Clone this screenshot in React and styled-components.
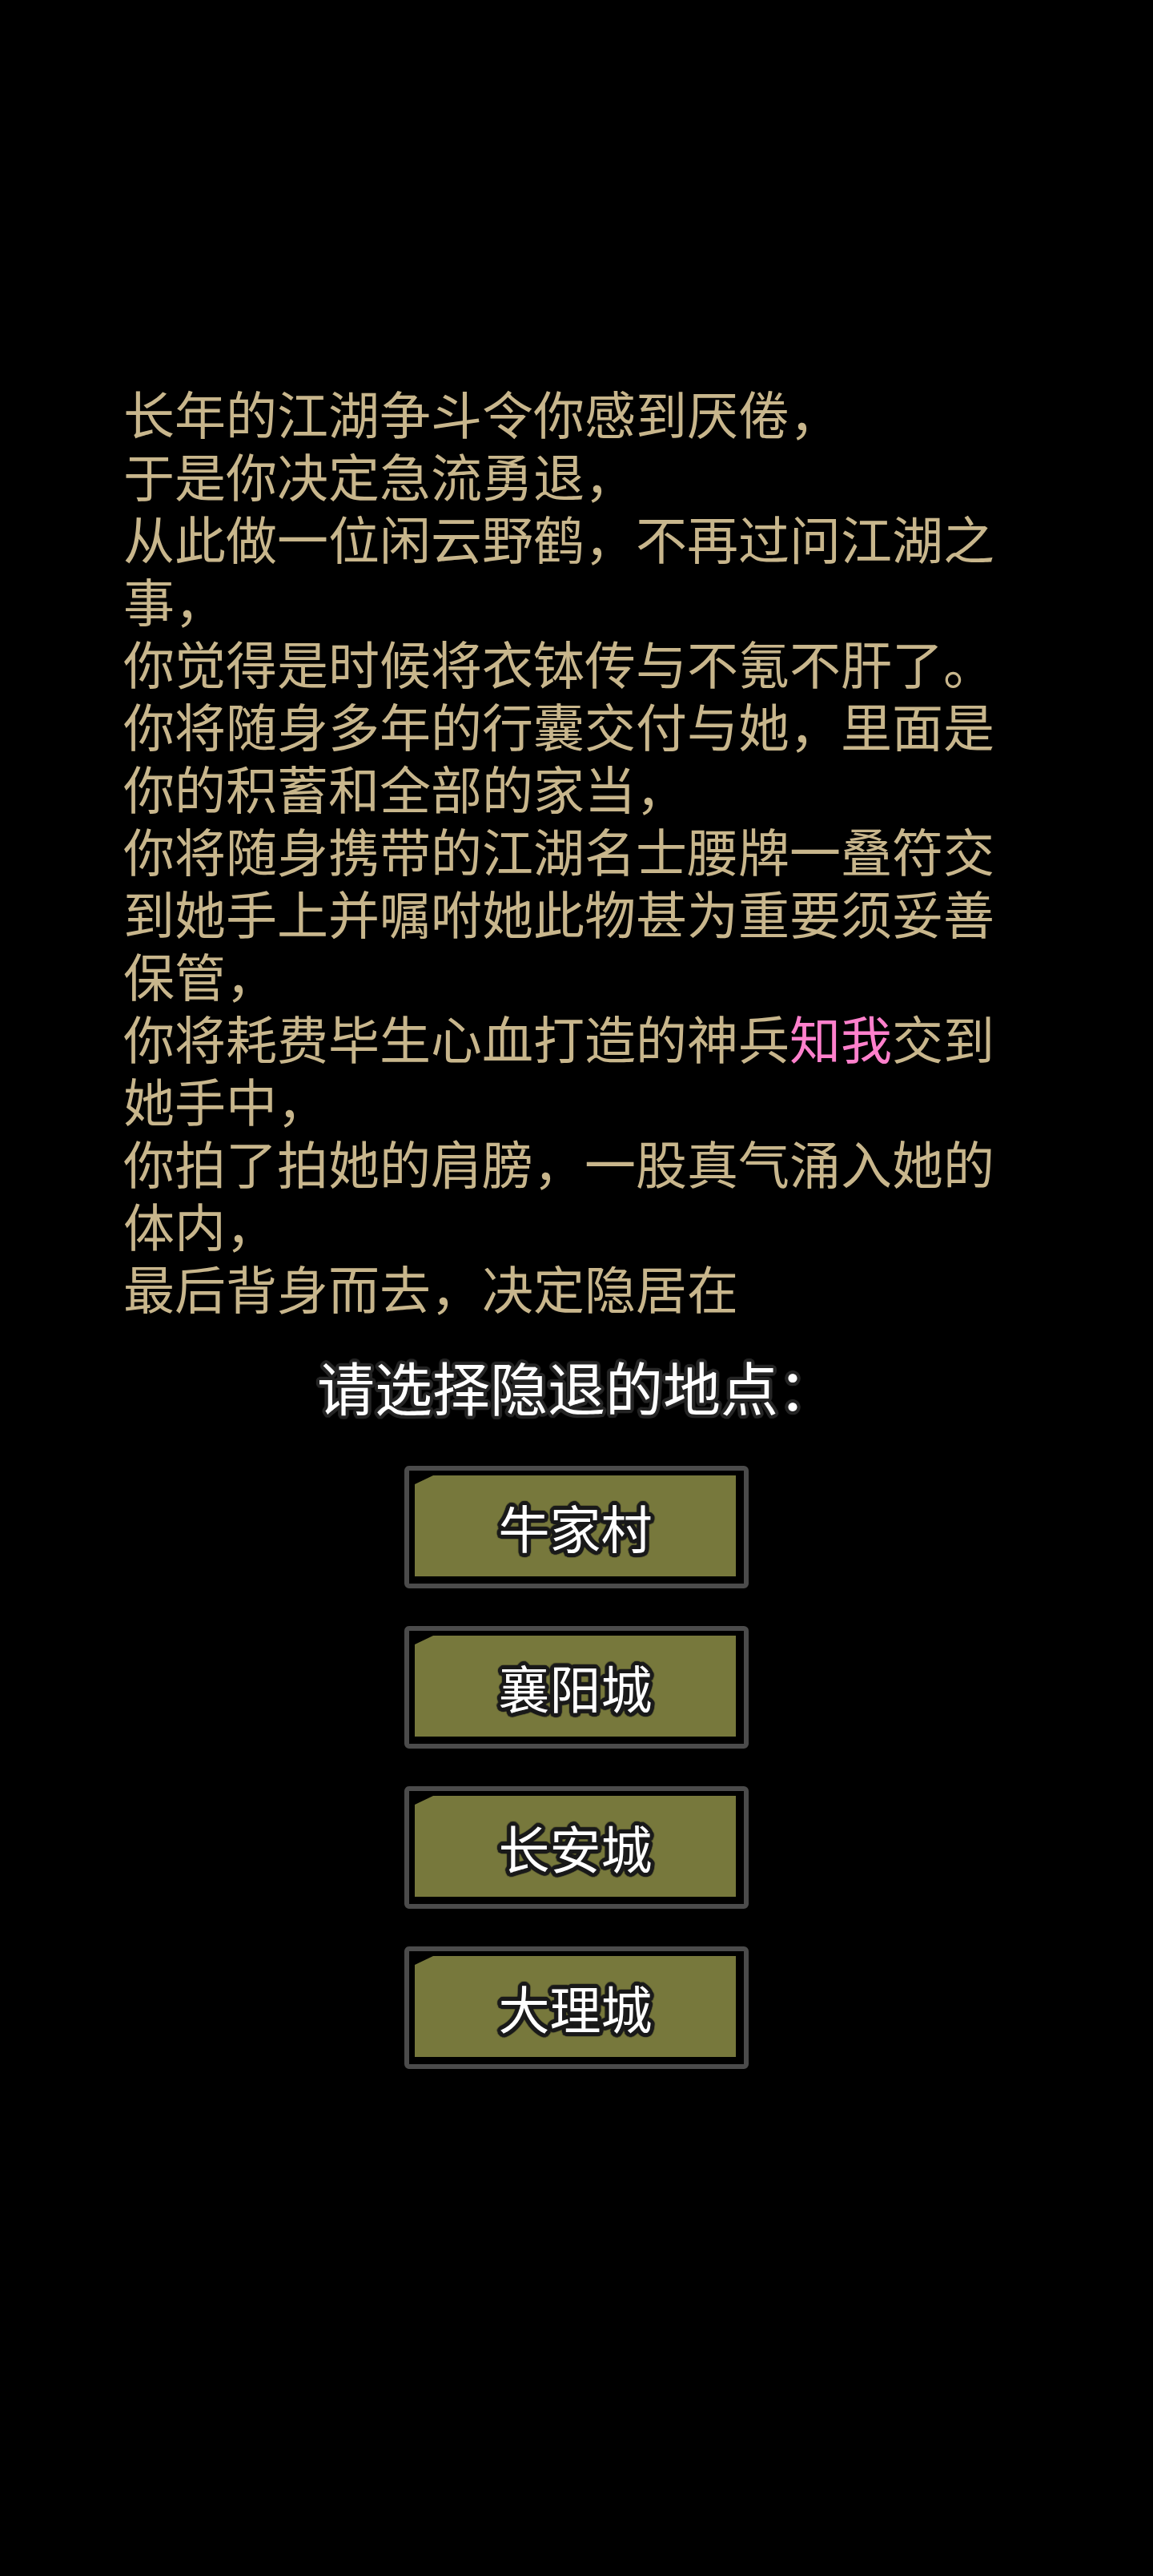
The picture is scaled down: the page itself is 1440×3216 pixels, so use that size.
import React from "react";
import styled, { createGlobalStyle } from "styled-components";

const GlobalStyle = createGlobalStyle`
  html, body {
    margin: 0;
    padding: 0;
    background: #000;
  }
  body {
    font-family: "Noto Sans CJK SC", "Noto Sans", sans-serif;
  }
`;

// builds a ring of shadows so the text gets a solid outline
const outline = (size, color) => {
  const parts = [];
  for (let i = 0; i < 24; i++) {
    const a = (i / 24) * Math.PI * 2;
    const x = (Math.cos(a) * size).toFixed(1);
    const y = (Math.sin(a) * size).toFixed(1);
    parts.push(`${x}px ${y}px 1px ${color}`);
  }
  return parts.join(", ");
};

const places = ["牛家村", "襄阳城", "长安城", "大理城"];

export default function App() {
  return (
    <>
      <GlobalStyle />
      <Page>
        <Story>
          <Line>长年的江湖争斗令你感到厌倦，</Line>
          <Line>于是你决定急流勇退，</Line>
          <Line>从此做一位闲云野鹤，不再过问江湖之事，</Line>
          <Line>你觉得是时候将衣钵传与不氪不肝了。</Line>
          <Line>你将随身多年的行囊交付与她，里面是你的积蓄和全部的家当，</Line>
          <Line>
            你将随身携带的江湖名士腰牌一叠符交到她手上并嘱咐她此物甚为重要须妥善保管，
          </Line>
          <Line>
            你将耗费毕生心血打造的神兵<Weapon>知我</Weapon>交到她手中，
          </Line>
          <Line>你拍了拍她的肩膀，一股真气涌入她的体内，</Line>
          <Line>最后背身而去，决定隐居在</Line>
        </Story>

        <Prompt>请选择隐退的地点：</Prompt>

        <Choices>
          {places.map((p) => (
            <ChoiceButton key={p}>
              <ChoiceFill>
                <ChoiceLabel>{p}</ChoiceLabel>
              </ChoiceFill>
            </ChoiceButton>
          ))}
        </Choices>
      </Page>
    </>
  );
}

const Page = styled.div`
  width: 1440px;
  min-height: 3216px;
  background: #000;
  padding-top: 475px;
  box-sizing: border-box;
  display: flex;
  flex-direction: column;
  align-items: center;
`;

const Story = styled.div`
  width: 1132px;
  box-sizing: border-box;
  color: #c8b68c;
  font-size: 64px;
  line-height: 78px;
`;

const Line = styled.p`
  margin: 0;
`;

const Weapon = styled.span`
  color: #ff80cc;
`;

const Prompt = styled.div`
  margin-top: 40px;
  color: #fff;
  font-size: 72px;
  line-height: 90px;
  text-shadow: ${outline(4, "#262626")};
`;

const Choices = styled.div`
  margin-top: 55px;
  display: flex;
  flex-direction: column;
  gap: 47px;
`;

const ChoiceButton = styled.button`
  width: 430px;
  height: 153px;
  box-sizing: border-box;
  border: 6px solid #4b4b4b;
  border-radius: 6px;
  background: #000;
  padding: 6px 10px 9px 7px;
  margin: 0;
  display: flex;
  cursor: pointer;
`;

const ChoiceFill = styled.div`
  flex: 1;
  background: #77783c;
  clip-path: polygon(23px 0, 100% 0, 100% 100%, 0 100%, 0 11px);
  display: flex;
  align-items: center;
  justify-content: center;
`;

const ChoiceLabel = styled.span`
  font-family: "Noto Sans CJK SC", "Noto Sans", sans-serif;
  font-size: 64px;
  line-height: 1;
  color: #fff;
  text-shadow: ${outline(5, "#1b1b1b")};
`;
